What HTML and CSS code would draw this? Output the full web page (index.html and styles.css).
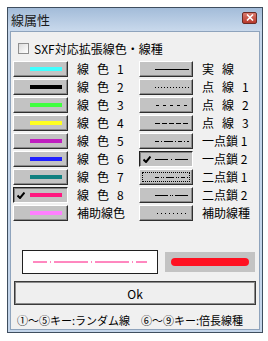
FILE: index.html
```html
<!DOCTYPE html>
<html lang="ja">
<head>
    <meta charset="UTF-8">
    <title>線属性</title>
    <link rel="stylesheet" href="styles.css">
</head>
<body>
    <div class="window">
        <div class="titlebar">
            <span class="title">線属性</span>
            <span class="close-btn">
                <svg width="8" height="7" viewBox="0 0 8 7"><path d="M1 0.5 L7 6.5 M7 0.5 L1 6.5" stroke="#fff" stroke-width="1.6"/></svg>
            </span>
        </div>
        <div class="content">
            <label class="check-row"><span class="checkbox"></span>SXF対応拡張線色・線種</label>

            <div class="grid">
                <!-- 線色 / 線種 -->
                <div class="row"><button class="btn"><span class="swatch" style="background:#40ffff"></span></button><span class="lbl sp">線色1</span></div>
                <div class="row"><button class="btn ln"><svg width="34" height="1"><line x1="0" y1="0.5" x2="34" y2="0.5"/></svg></button><span class="lbl sp">実線</span></div>

                <div class="row"><button class="btn"><span class="swatch" style="background:#000"></span></button><span class="lbl sp">線色2</span></div>
                <div class="row"><button class="btn ln"><svg width="34" height="1"><line x1="0" y1="0.5" x2="34" y2="0.5" stroke-dasharray="1 2"/></svg></button><span class="lbl sp">点線1</span></div>

                <div class="row"><button class="btn"><span class="swatch" style="background:#40ff40"></span></button><span class="lbl sp">線色3</span></div>
                <div class="row"><button class="btn ln"><svg width="34" height="1"><line x1="1" y1="0.5" x2="34" y2="0.5" stroke-dasharray="3 4"/></svg></button><span class="lbl sp">点線2</span></div>

                <div class="row"><button class="btn"><span class="swatch" style="background:#ffff20"></span></button><span class="lbl sp">線色4</span></div>
                <div class="row"><button class="btn ln"><svg width="34" height="1"><line x1="0" y1="0.5" x2="34" y2="0.5" stroke-dasharray="5 2"/></svg></button><span class="lbl sp">点線3</span></div>

                <div class="row"><button class="btn"><span class="swatch" style="background:#c020c0"></span></button><span class="lbl sp">線色5</span></div>
                <div class="row"><button class="btn ln"><svg width="34" height="1"><line x1="0" y1="0.5" x2="34" y2="0.5" stroke-dasharray="4 2 1 2 9 2 1 2"/></svg></button><span class="lbl">一点鎖 1</span></div>

                <div class="row"><button class="btn"><span class="swatch" style="background:#2020ff"></span></button><span class="lbl sp">線色6</span></div>
                <div class="row"><button class="btn ln on"><span class="tick"><svg width="8" height="7"><path d="M0.5 3.5 L3 6 L7.5 0.5" fill="none" stroke="#000" stroke-width="2"/></svg></span><svg width="34" height="1"><line x1="0" y1="0.5" x2="34" y2="0.5" stroke-dasharray="13 3 1 3"/></svg></button><span class="lbl">一点鎖 2</span></div>

                <div class="row"><button class="btn"><span class="swatch" style="background:#108080"></span></button><span class="lbl sp">線色7</span></div>
                <div class="row"><button class="btn ln focus"><svg width="34" height="1"><line x1="0" y1="0.5" x2="34" y2="0.5" stroke-dasharray="4 2 1 1 1 2 8 2 1 1 1 2"/></svg></button><span class="lbl">二点鎖 1</span></div>

                <div class="row"><button class="btn on"><span class="tick"><svg width="8" height="7"><path d="M0.5 3.5 L3 6 L7.5 0.5" fill="none" stroke="#000" stroke-width="2"/></svg></span><span class="swatch" style="background:#ff1880"></span></button><span class="lbl sp">線色8</span></div>
                <div class="row"><button class="btn ln"><svg width="34" height="1"><line x1="0" y1="0.5" x2="34" y2="0.5" stroke-dasharray="13 2 1 1 1 2"/></svg></button><span class="lbl">二点鎖 2</span></div>

                <div class="row"><button class="btn"><span class="swatch" style="background:#ff80ff"></span></button><span class="lbl">補助線色</span></div>
                <div class="row"><button class="btn ln"><svg width="34" height="1"><line x1="2" y1="0.5" x2="34" y2="0.5" stroke-dasharray="1 3"/></svg></button><span class="lbl">補助線種</span></div>
            </div>

            <div class="preview">
                <div class="preview-line">
                    <svg width="114" height="2"><line x1="0" y1="1" x2="114" y2="1" stroke="#ff1080" stroke-width="1" stroke-dasharray="14 3 1 3 34 3 1 3 34 3 1 3 14"/></svg>
                </div>
                <div class="preview-color">
                    <svg width="78" height="8"><line x1="4" y1="4" x2="74" y2="4" stroke="#ff1020" stroke-width="8" stroke-linecap="round"/></svg>
                </div>
            </div>

            <button class="ok-btn">Ok</button>

            <div class="hint"><span>①～⑤キー:ランダム線</span><span>⑥～⑨キー:倍長線種</span></div>
        </div>
    </div>
</body>
</html>
```

FILE: styles.css
```css
body {
    margin: 0;
    padding: 7px;
    background-color: #fff;
    font-family: "Noto Sans CJK JP", "Liberation Sans", sans-serif;
    font-size: 12px;
    color: #000;
}
.window {
    width: 256px;
    height: 326px;
    box-sizing: border-box;
    border: 1px solid #3f4e5f;
    background-color: #c4d5ea; /* 窗框 */
    padding: 0 2px 2px 2px;
    display: flex;
    flex-direction: column;
}
.titlebar {
    height: 23px;
    display: flex;
    align-items: center;
    justify-content: space-between;
    background: linear-gradient(#a3bcd9, #c9d9ec);
    margin: 0 -2px;
    padding: 0 5px 0 3px;
}
.title {
    font-size: 13px;
    line-height: 14px;
    color: #1a1a1a;
}
.close-btn {
    width: 13px;
    height: 10px;
    margin-top: -4px;
    border: 1px solid #6b2a24;
    border-radius: 2px;
    background: linear-gradient(#d9796c, #b8392c);
    display: flex;
    align-items: center;
    justify-content: center;
}
.content {
    flex: 1;
    background-color: #f0f0f0;
    border: 1px solid #8ea3bc;
    display: flex;
    flex-direction: column;
}
.check-row {
    display: flex;
    align-items: center;
    gap: 5px;
    height: 12px;
    margin: 10px 0 0 7px;
    font-size: 12px;
}
.checkbox {
    width: 11px;
    height: 11px;
    box-sizing: border-box;
    border: 1px solid #8f8f8f;
    background: linear-gradient(135deg, #dcdcdc, #fff);
}
.grid {
    display: grid;
    grid-template-columns: 126px 1fr;
    row-gap: 2px;
    margin: 7px 0 0 2px;
}
.row {
    display: flex;
    align-items: center;
    height: 16px;
}
.btn {
    position: relative;
    width: 55px;
    height: 16px;
    box-sizing: border-box;
    padding: 0 5px 0 0;
    border: 1px solid;
    border-color: #fff #303030 #303030 #fff;
    box-shadow: inset -1px -1px #8a8a8a;
    background-color: #c3c3c3;
    display: flex;
    align-items: center;
    justify-content: flex-end;
    font: inherit;
}
.btn.ln {
    width: 54px;
    padding-right: 3px;
}
.btn.ln line {
    stroke: #000;
    stroke-width: 1;
}
.btn.on {
    border-color: #202020 #fff #fff #202020;
    box-shadow: inset 1px 1px #808080;
}
.btn.focus {
    outline: 1px dotted #000;
    outline-offset: -4px;
}
.tick {
    position: absolute;
    left: 3px;
    top: 4px;
    line-height: 0;
}
.swatch {
    width: 32px;
    height: 4px;
}
.lbl {
    margin-left: 9px;
    font-size: 12px;
    line-height: 14px;
    white-space: nowrap;
}
.lbl.sp {
    letter-spacing: 8px;
}
.preview {
    display: flex;
    align-items: center;
    gap: 7px;
    margin: 29px 0 0 11px;
}
.preview-line {
    width: 136px;
    height: 24px;
    box-sizing: border-box;
    border: 1px solid #202020;
    background-color: #fff;
    display: flex;
    align-items: center;
    justify-content: center;
}
.preview-color {
    width: 90px;
    height: 20px;
    background-color: #c3c3c3;
    display: flex;
    align-items: center;
    justify-content: center;
}
.ok-btn {
    margin: 7px 0 0 3px;
    width: 242px;
    height: 24px;
    box-sizing: border-box;
    border: 1px solid #3a3a3a;
    box-shadow: inset 0 0 0 1px #8c8c8c;
    background-color: #efefef;
    font: inherit;
    font-size: 12px;
    padding: 0;
}
.hint {
    display: flex;
    gap: 11px;
    margin: 9px 0 0 6px;
    font-size: 11px;
    line-height: 12px;
    white-space: nowrap;
}
```
